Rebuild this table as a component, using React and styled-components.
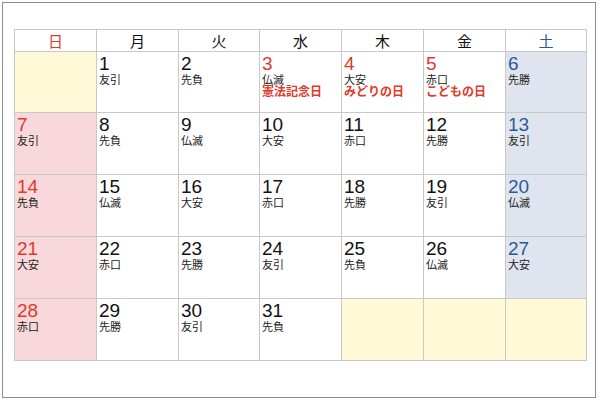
import React from "react";
import styled, { createGlobalStyle } from "styled-components";

const Global = createGlobalStyle`
  html, body { margin: 0; padding: 0; background: #fff; }
  body { font-family: "Liberation Sans", "Noto Sans CJK JP", sans-serif; }
`;

const Frame = styled.div`
  box-sizing: border-box;
  margin: 2px 0 0 2px;
  width: 594px;
  height: 396px;
  border: 1px solid #8c8c8c;
  padding: 26px 0 0 11px;
`;

const Grid = styled.div`
  display: grid;
  grid-template-columns: 82px 82px 81px 82px 82px 82px 81px;
  grid-template-rows: 22px 61px repeat(4, 62px);
  width: 573px;
  box-sizing: border-box;
  border-left: 1px solid #c9c9c9;
  border-top: 1px solid #c9c9c9;
`;

const Head = styled.div`
  box-sizing: border-box;
  border-right: 1px solid #c9c9c9;
  border-bottom: 1px solid #c9c9c9;
  display: flex;
  align-items: center;
  justify-content: center;
  font-size: 15px;
  color: ${(p) => (p.$tone === "sun" ? "#e0392c" : p.$tone === "sat" ? "#2d5a9a" : "#111")};
`;

const bg = { sun: "#f8d8da", sat: "#dfe4ee", empty: "#fff9d8" };

const Cell = styled.div`
  box-sizing: border-box;
  border-right: 1px solid #c9c9c9;
  border-bottom: 1px solid #c9c9c9;
  background: ${(p) => bg[p.$tone] || "#fff"};
  padding: 1px 2px;
  display: flex;
  flex-direction: column;
`;

const Num = styled.div`
  font-size: 19px;
  line-height: 21px;
  color: ${(p) => (p.$red ? "#e0392c" : p.$blue ? "#2d5a9a" : "#111")};
`;

const Rokuyo = styled.div`
  font-size: 11px;
  line-height: 12px;
  color: #222;
`;

const Holiday = styled.div`
  font-size: 12px;
  line-height: 13px;
  font-weight: bold;
  color: #e0392c;
`;

const heads = ["日", "月", "火", "水", "木", "金", "土"];
const holidays = { 3: "憲法記念日", 4: "みどりの日", 5: "こどもの日" };
const rokuMap = {
  1: "友引", 2: "先負", 3: "仏滅", 4: "大安", 5: "赤口", 6: "先勝",
  7: "友引", 8: "先負", 9: "仏滅", 10: "大安", 11: "赤口", 12: "先勝",
  13: "友引", 14: "先負", 15: "仏滅", 16: "大安", 17: "赤口", 18: "先勝",
  19: "友引", 20: "仏滅", 21: "大安", 22: "赤口", 23: "先勝", 24: "友引",
  25: "先負", 26: "仏滅", 27: "大安", 28: "赤口", 29: "先勝", 30: "友引", 31: "先負",
};

export default function App() {
  const cells = [];
  for (let i = 0; i < 35; i++) {
    const d = i;
    const col = i % 7;
    if (d < 1 || d > 31) {
      cells.push(<Cell key={i} $tone="empty" />);
      continue;
    }
    const hol = holidays[d];
    const tone = col === 0 ? "sun" : col === 6 ? "sat" : "";
    cells.push(
      <Cell key={i} $tone={tone}>
        <Num $red={col === 0 || !!hol} $blue={col === 6}>{d}</Num>
        <Rokuyo>{rokuMap[d]}</Rokuyo>
        {hol && <Holiday>{hol}</Holiday>}
      </Cell>
    );
  }
  return (
    <>
      <Global />
      <Frame>
        <Grid>
          {heads.map((h, i) => (
            <Head key={h} $tone={i === 0 ? "sun" : i === 6 ? "sat" : ""}>{h}</Head>
          ))}
          {cells}
        </Grid>
      </Frame>
    </>
  );
}
